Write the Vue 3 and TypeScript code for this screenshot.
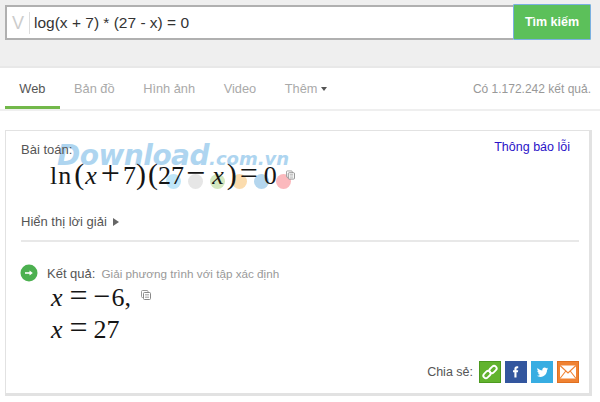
<script setup lang="ts">
const tabs: string[] = ['Bản đồ', 'Hình ảnh', 'Video'];
const dots: string[] = ['#bfe6f8', '#e6e6e6', '#d3e8c0', '#fbdcae', '#b4d6ee', '#fbb9bd'];
</script>

<template>
  <div class="page">
    <header class="search">
      <div class="search__box">
        <div class="search__input">
          <span class="search__logo">V</span>
          <span class="search__query">log(x + 7) * (27 - x) = 0</span>
        </div>
        <button class="search__btn">Tìm kiếm</button>
      </div>
    </header>

    <nav class="tabs">
      <a class="tab tab--active">Web</a>
      <a v-for="tab in tabs" :key="tab" class="tab">{{ tab }}</a>
      <a class="tab">Thêm <i class="caret"></i></a>
      <span class="tabs__count">Có 1.172.242 kết quả.</span>
    </nav>

    <section class="card">
      <div class="problem">
        <div class="watermark">Download<span class="watermark__tld">.com.vn</span></div>
        <div class="dots">
          <span v-for="c in dots" :key="c" class="dot" :style="{ background: c }"></span>
        </div>
        <div class="problem__head">
          <span>Bài toán:</span>
          <a class="report">Thông báo lỗi</a>
        </div>
        <div class="math math--problem">
          <span class="ln">ln</span>
          <span class="p p--a">(</span>
          <em class="x1">x</em>
          <span class="op op--plus">+</span>
          <span>7</span>
          <span class="p p--b">)</span>
          <span class="p p--c">(</span>
          <span>27</span>
          <span class="op op--minus">−</span>
          <em class="x2">x</em>
          <span class="p">)</span>
          <span class="op op--eq">=</span>
          <span>0</span>
          <svg class="copy copy--top" viewBox="0 0 10 10" width="9" height="10">
            <rect x="0.5" y="0.5" width="6.5" height="7" rx="1" fill="#fff" stroke="#999" />
            <rect x="2.5" y="2.5" width="7" height="7" rx="1" fill="#fff" stroke="#888" />
            <path d="M4 4.500h4M4 6h4M4 7.500h4" stroke="#aaa" stroke-width="0.8" />
          </svg>
        </div>
        <div class="steps">Hiển thị lời giải <i class="arrow"></i></div>
      </div>

      <div class="result">
        <div class="result__head">
          <svg class="result__icon" viewBox="0 0 18 18" width="18" height="18">
            <circle cx="9" cy="9" r="8.500" fill="#4cb050" />
            <path d="M5 9h6" stroke="#fff" stroke-width="1.600" />
            <path d="M9.500 6.600 12.800 9l-3.300 2.400z" fill="#fff" />
          </svg>
          <span class="result__label">Kết quả:</span>
          <span class="result__desc">Giải phương trình với tập xác định</span>
        </div>
        <div class="math math--line math--first">
          <em>x</em>
          <span class="op op--eq2">=</span>
          <span class="op op--neg">−</span>
          <span>6,</span>
          <svg class="copy" viewBox="0 0 10 10" width="10" height="10">
            <rect x="0.5" y="0.5" width="6.5" height="7" rx="1" fill="#fff" stroke="#999" />
            <rect x="2.5" y="2.5" width="7" height="7" rx="1" fill="#fff" stroke="#888" />
            <path d="M4 4.500h4M4 6h4M4 7.500h4" stroke="#aaa" stroke-width="0.8" />
          </svg>
        </div>
        <div class="math math--line">
          <em>x</em>
          <span class="op op--eq2">=</span>
          <span>27</span>
        </div>
      </div>

      <div class="share">
        <span class="share__label">Chia sẻ:</span>
        <a class="share__btn share__btn--link">
          <svg viewBox="0 0 22 22" width="20" height="20" fill="none" stroke="#fff" stroke-width="2">
            <rect x="3.200" y="11" width="9" height="5.600" rx="2.800" transform="rotate(-45 7.700 13.800)" />
            <rect x="9.800" y="5.400" width="9" height="5.600" rx="2.800" transform="rotate(-45 14.300 8.200)" />
          </svg>
        </a>
        <a class="share__btn share__btn--fb">
          <svg viewBox="0 0 22 22" width="22" height="22">
            <path d="M9.400 16.500v-5.300H8V9.200h1.400V7.800c0-1.700 1-2.600 2.400-2.600h1.400v2.100h-.9c-.6 0-.8.3-.8.8v1.100h1.700l-.3 2h-1.400v5.300z" fill="#fff" />
          </svg>
        </a>
        <a class="share__btn share__btn--tw">
          <svg viewBox="0 0 22 22" width="22" height="22">
            <path d="M17 7.600c-.4.200-.9.300-1.300.4.500-.3.800-.7 1-1.200-.4.200-.9.400-1.400.5-.4-.4-1-.7-1.700-.7-1.300 0-2.300 1-2.300 2.300 0 .2 0 .4.100.5-1.900-.1-3.600-1-4.800-2.400-.2.300-.3.700-.3 1.200 0 .8.400 1.500 1 1.900-.4 0-.7-.1-1-.3 0 1.100.8 2.100 1.900 2.300-.3.100-.7.100-1 .1.300.9 1.100 1.600 2.100 1.600-.8.600-1.800 1-2.900 1h-.6c1.100.7 2.300 1.100 3.600 1.100 4.300 0 6.600-3.600 6.600-6.600v-.3c.4-.4.800-.8 1.100-1.200z" fill="#fff" />
          </svg>
        </a>
        <a class="share__btn share__btn--mail">
          <svg viewBox="0 0 20 20" width="20" height="20" fill="none">
            <rect x="2" y="3.500" width="16" height="13" fill="#fff" />
            <path d="M2 3.500 10 11l8-7.500M2 16.500 7.800 9M18 16.500 12.200 9" stroke="#f08232" stroke-width="1.100" />
          </svg>
        </a>
      </div>
    </section>
  </div>
</template>

<style scoped>
.page {
  width: 600px;
  height: 402px;
  overflow: hidden;
  background: #fff;
  font-family: "Liberation Sans", Arial, sans-serif;
  color: #555;
}

.search {
  height: 68px;
  padding: 5px 9px 0 5px;
  box-sizing: border-box;
  background: #efefef;
  border-bottom: 2px solid #e8e8e8;
}

.search__box {
  display: flex;
  height: 35px;
}

.search__input {
  flex: 1;
  display: flex;
  align-items: center;
  background: #fff;
  border: 2px solid #b0b0b0;
  border-right: none;
}

.search__logo {
  width: 22px;
  height: 22px;
  margin-right: 4px;
  border-right: 1px solid #ddd;
  text-align: center;
  font-size: 18px;
  line-height: 22px;
  color: #ccc;
}

.search__query {
  font-size: 15.500px;
  color: #333;
}

.search__btn {
  width: 78px;
  height: 36px;
  margin-top: -1px;
  border: 1px solid #7ab0e0;
  border-radius: 1px;
  background: #5cc05a;
  color: #fff;
  font-family: "Liberation Sans", sans-serif;
  font-weight: 700;
  font-size: 12.500px;
}

.tabs {
  display: flex;
  align-items: center;
  height: 43px;
  box-sizing: border-box;
  padding: 0 9px 0 5px;
  border-bottom: 2px solid #efefef;
  font-size: 12.800px;
  color: #aaa;
}

.tab {
  padding: 0 14.300px;
  line-height: 41px;
  height: 41px;
  box-sizing: border-box;
}

.tab--active {
  color: #555;
  border-bottom: 3px solid #72b84a;
}

.caret {
  display: inline-block;
  margin-left: 0;
  vertical-align: 2px;
  border-left: 3.500px solid transparent;
  border-right: 3.500px solid transparent;
  border-top: 4px solid #555;
}

.tabs__count {
  margin-left: auto;
  font-size: 12px;
  color: #999;
}

.card {
  margin: 19px 0 0 5px;
  width: 587px;
  height: 266px;
  box-sizing: border-box;
  border: 1px solid #e2e2e2;
  border-right-width: 3px;
  border-bottom-width: 3px;
  padding: 0 10px 0 15px;
  display: flex;
  flex-direction: column;
}

.problem {
  position: relative;
  height: 111px;
  border-bottom: 2px solid #e8e8e8;
  box-sizing: border-box;
}

.problem__head {
  position: relative;
  display: flex;
  justify-content: space-between;
  padding-top: 11px;
  font-size: 13px;
  line-height: 15px;
  color: #555;
}

.report {
  color: #2a12c8;
  margin: -2px 9px 0 0;
  font-size: 12.500px;
}

.math {
  font-family: "Liberation Serif", serif;
  color: #151515;
}

.math em {
  font-style: italic;
}

.math--problem {
  position: relative;
  display: flex;
  align-items: baseline;
  height: 32px;
  margin: 0 0 0 29px;
  font-size: 26px;
  line-height: 32px;
}

.ln {
  letter-spacing: 1px;
  margin-right: 2px;
}

.p {
  font-size: 30px;
  line-height: 32px;
}

.p--a {
  margin-right: 1px;
}

.x1 {
  margin-right: 4px;
}

.op--plus {
  font-size: 34px;
  margin-right: 3px;
}

.p--b {
  margin-right: 2px;
}

.op--minus {
  font-size: 34px;
  margin: 0 7px 0 2px;
}

.x2 {
  margin-right: 3px;
}

.op--eq {
  font-size: 32px;
  margin: 0 6px 0 3px;
}

.copy {
  margin-left: 10px;
  align-self: center;
}

.copy--top {
  margin: 3px 0 0 9px;
}

.watermark {
  position: absolute;
  left: 36px;
  top: 10px;
  font-family: "DejaVu Sans", sans-serif;
  font-style: italic;
  font-weight: 700;
  font-size: 28px;
  line-height: 30px;
  letter-spacing: -0.500px;
  color: #aed5f0;
}

.watermark__tld {
  font-size: 18px;
  letter-spacing: 0;
}

.dots {
  position: absolute;
  left: 144.500px;
  top: 43px;
  display: flex;
  gap: 7px;
}

.dot {
  width: 15px;
  height: 15px;
  border-radius: 50%;
}

.steps {
  margin-top: 25px;
  font-size: 13px;
  line-height: 15px;
  color: #555;
}

.arrow {
  display: inline-block;
  margin-left: 3px;
  border-top: 4px solid transparent;
  border-bottom: 4px solid transparent;
  border-left: 6px solid #666;
}

.result {
  padding-top: 22px;
}

.result__head {
  display: flex;
  align-items: center;
  height: 18px;
}

.result__icon {
  margin: 0 9px 0 -1px;
}

.result__label {
  margin-right: 6px;
  font-size: 13px;
  color: #555;
}

.result__desc {
  font-size: 11.700px;
  color: #999;
}

.math--line {
  display: flex;
  align-items: baseline;
  height: 32px;
  margin-left: 30px;
  font-size: 26px;
  line-height: 33px;
}

.math--first {
  margin-top: -3px;
}

.op--eq2 {
  font-size: 32px;
  margin: 0 6px 0 7px;
}

.op--neg {
  font-size: 30px;
  margin-right: 1px;
}

.share {
  margin-top: auto;
  margin-bottom: 10px;
  display: flex;
  align-items: center;
  justify-content: flex-end;
  gap: 4px;
}

.share__label {
  margin-right: 2px;
  font-size: 12.500px;
  color: #555;
}

.share__btn {
  display: flex;
  align-items: center;
  justify-content: center;
  width: 22px;
  height: 22px;
  box-sizing: border-box;
}

.share__btn--link {
  background: #62b32e;
  border: 1px solid #4c9a1f;
}

.share__btn--fb {
  background: #33569e;
}

.share__btn--tw {
  background: #38ade2;
}

.share__btn--mail {
  background: #f08232;
  border: 1px solid #e07020;
}
</style>
